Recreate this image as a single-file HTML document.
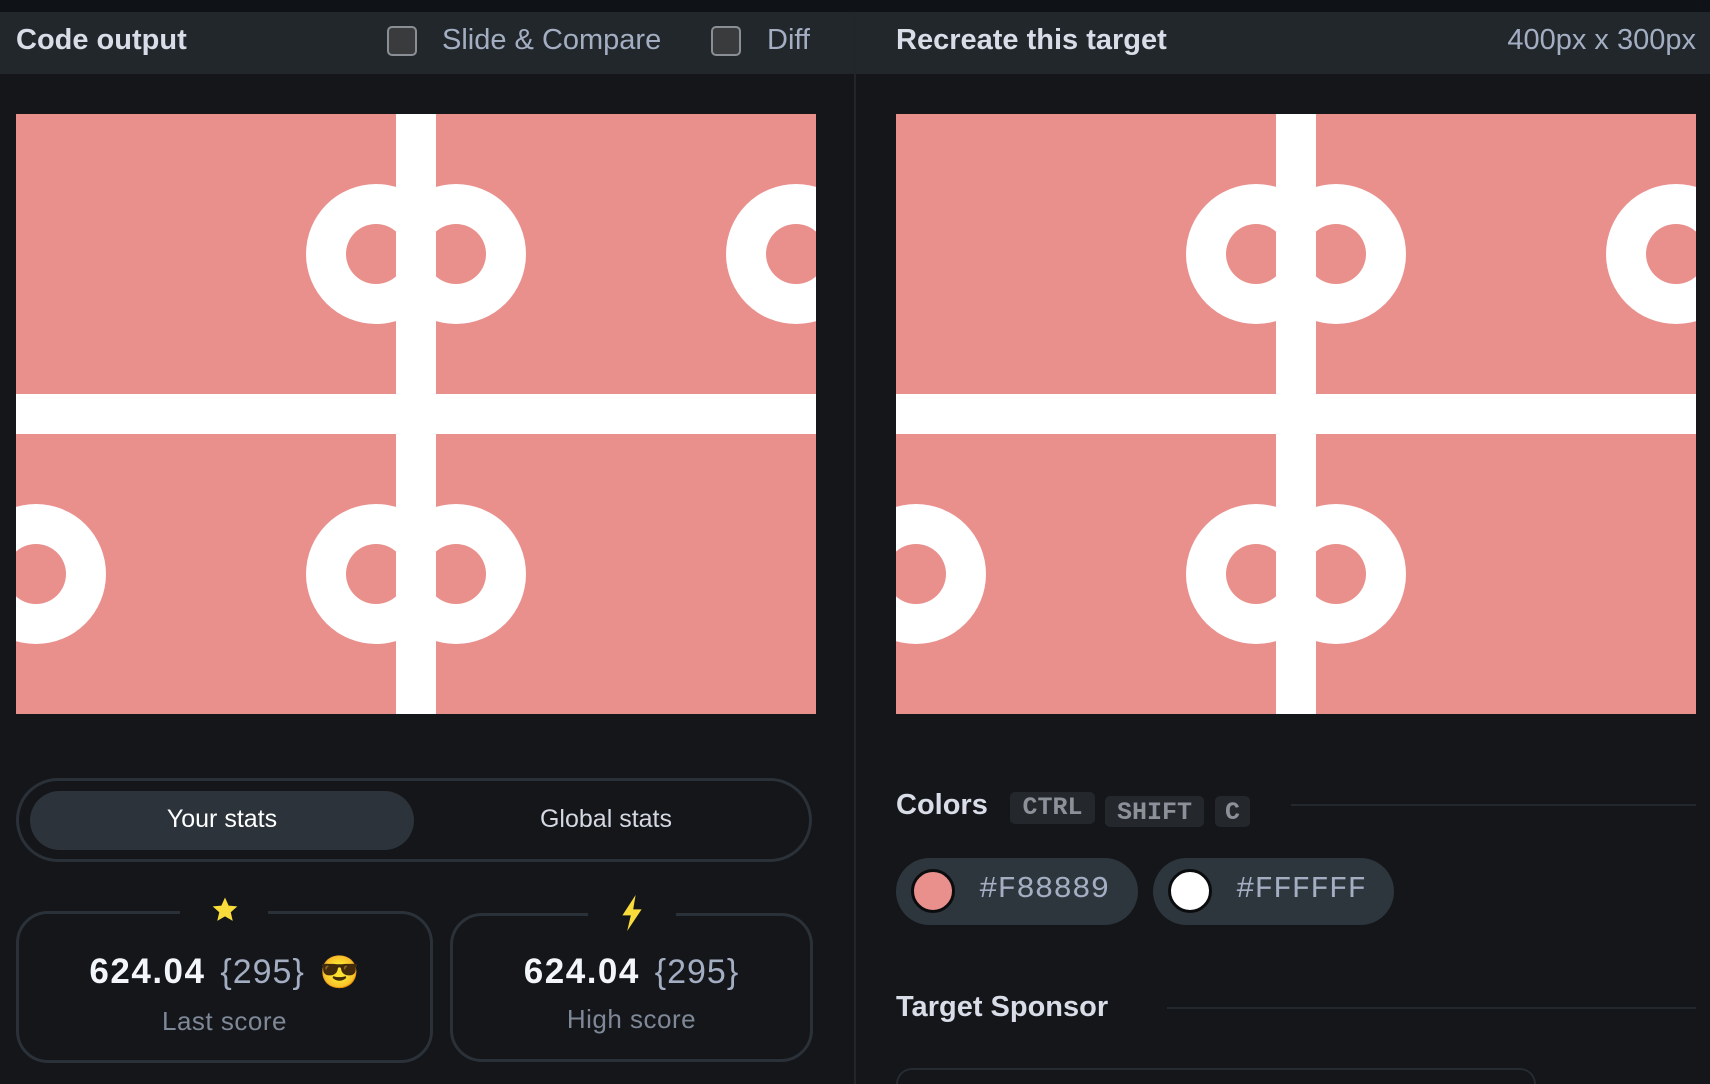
<!DOCTYPE html>
<html style="width:1710px;height:1084px;overflow:hidden"><head><meta charset="utf-8"><style>
*{margin:0;padding:0;box-sizing:border-box}
body{width:1710px;height:1084px;background:#14161a;font-family:"Liberation Sans",sans-serif;position:relative;overflow:hidden;color:#e6e9f0}
.a{position:absolute}
.hdr{top:12px;height:62px;background:#22272c}
.top{top:0;left:0;width:1710px;height:12px;background:#0f1217}
.t{font-weight:bold;font-size:29px;color:#d9dde8;letter-spacing:0px}
.g{font-size:29px;color:#a3aec2}
.cb{width:30px;height:30px;border:2px solid #8a8f96;border-radius:5px;background:#3a3b3c}
.card{border:3px solid #2a3139;border-radius:32px}
.num{font-weight:bold;font-size:35px;color:#f2f5fa;letter-spacing:1.5px}
.br{font-size:34px;color:#a3aec2;font-weight:normal;letter-spacing:1px}
.lbl{font-size:26px;color:#7e8897;letter-spacing:0.5px}
.kbd{background:#24272b;border-radius:5px;font-family:"Liberation Mono",monospace;font-weight:bold;font-size:25px;color:#8c9099;text-align:center}
.chip{background:#2d353d;border-radius:34px;height:67px}
.dot{width:44px;height:44px;border-radius:50%;border:3px solid #0b0c0e;top:11px;left:15px}
.hex{font-family:"Liberation Mono",monospace;font-size:31px;color:#a3aec2;top:14px;left:83px}
.line{height:2px;background:#22282d}
</style></head><body>
<div class="a top"></div>
<div class="a hdr" style="left:0;width:854px"></div>
<div class="a hdr" style="left:856px;width:854px"></div>
<div class="a" style="left:854px;top:12px;width:2px;height:1072px;background:#22262b"></div>
<div class="a t" style="left:16px;top:24px">Code output</div>
<div class="a cb" style="left:387px;top:26px"></div>
<div class="a g" style="left:442px;top:24px">Slide &amp; Compare</div>
<div class="a cb" style="left:711px;top:26px"></div>
<div class="a g" style="left:767px;top:24px">Diff</div>
<div class="a t" style="left:896px;top:24px">Recreate this target</div>
<div class="a g" style="right:14px;top:24px">400px x 300px</div>

<svg class="a" style="left:16px;top:114px" width="800" height="600" viewBox="0 0 400 300">
<rect width="400" height="300" fill="#e98f8c"/>
<g fill="#fff">
<circle cx="180" cy="70" r="35"/><circle cx="220" cy="70" r="35"/><circle cx="390" cy="70" r="35"/>
<circle cx="180" cy="230" r="35"/><circle cx="220" cy="230" r="35"/><circle cx="10" cy="230" r="35"/>
</g>
<g fill="#e98f8c">
<circle cx="180" cy="70" r="15"/><circle cx="220" cy="70" r="15"/><circle cx="390" cy="70" r="15"/>
<circle cx="180" cy="230" r="15"/><circle cx="220" cy="230" r="15"/><circle cx="10" cy="230" r="15"/>
</g>
<rect x="190" y="0" width="20" height="300" fill="#fff"/><rect x="0" y="140" width="400" height="20" fill="#fff"/>
</svg>
<svg class="a" style="left:896px;top:114px" width="800" height="600" viewBox="0 0 400 300">
<rect width="400" height="300" fill="#e98f8c"/>
<g fill="#fff">
<circle cx="180" cy="70" r="35"/><circle cx="220" cy="70" r="35"/><circle cx="390" cy="70" r="35"/>
<circle cx="180" cy="230" r="35"/><circle cx="220" cy="230" r="35"/><circle cx="10" cy="230" r="35"/>
</g>
<g fill="#e98f8c">
<circle cx="180" cy="70" r="15"/><circle cx="220" cy="70" r="15"/><circle cx="390" cy="70" r="15"/>
<circle cx="180" cy="230" r="15"/><circle cx="220" cy="230" r="15"/><circle cx="10" cy="230" r="15"/>
</g>
<rect x="190" y="0" width="20" height="300" fill="#fff"/><rect x="0" y="140" width="400" height="20" fill="#fff"/>
</svg>

<div class="a" style="left:16px;top:778px;width:796px;height:84px;border:3px solid #2a3139;border-radius:42px"></div>
<div class="a" style="left:30px;top:791px;width:384px;height:59px;background:#2c333b;border-radius:30px"></div>
<div class="a" style="left:30px;top:805px;width:384px;text-align:center;font-size:25px;color:#fff">Your stats</div>
<div class="a" style="left:414px;top:805px;width:384px;text-align:center;font-size:25px;color:#d4d8e2">Global stats</div>

<div class="a card" style="left:16px;top:911px;width:417px;height:152px"></div>
<div class="a" style="left:180px;top:905px;width:88px;height:12px;background:#14161a"></div>
<svg class="a" style="left:209px;top:895px" width="32" height="30" viewBox="0 0 24 24"><path d="M12 2l2.9 6.5 7 .6-5.3 4.7 1.6 6.9L12 17.1 5.8 20.7l1.6-6.9L2.1 9.1l7-.6z" fill="#f9dc3c"/></svg>
<div class="a" style="left:16px;top:952px;width:417px;text-align:center;white-space:nowrap"><span class="num">624.04</span> <span class="br">&nbsp;{295}&nbsp;</span> <span style="font-size:32px">😎</span></div>
<div class="a lbl" style="left:16px;top:1006px;width:417px;text-align:center">Last score</div>

<div class="a card" style="left:450px;top:913px;width:363px;height:149px"></div>
<div class="a" style="left:588px;top:905px;width:88px;height:12px;background:#14161a"></div>
<svg class="a" style="left:619px;top:895px" width="26" height="36" viewBox="0 0 20 30"><path d="M13 0L2 17h7l-3 13 12-18h-7z" fill="#f9dc3c"/></svg>
<div class="a" style="left:450px;top:952px;width:363px;text-align:center;white-space:nowrap"><span class="num">624.04</span> <span class="br">&nbsp;{295}</span></div>
<div class="a lbl" style="left:450px;top:1004px;width:363px;text-align:center">High score</div>

<div class="a t" style="left:896px;top:789px">Colors</div>
<div class="a kbd" style="left:1010px;top:792px;width:85px;height:32px;line-height:32px">CTRL</div>
<div class="a kbd" style="left:1105px;top:796px;width:99px;height:31px;line-height:34px">SHIFT</div>
<div class="a kbd" style="left:1215px;top:796px;width:35px;height:31px;line-height:34px">C</div>
<div class="a line" style="left:1291px;top:804px;width:405px"></div>

<div class="a chip" style="left:896px;top:858px;width:242px"><div class="a dot" style="background:#e98f8c"></div><div class="a hex">#F88889</div></div>
<div class="a chip" style="left:1153px;top:858px;width:241px"><div class="a dot" style="background:#fff"></div><div class="a hex">#FFFFFF</div></div>

<div class="a t" style="left:896px;top:991px">Target Sponsor</div>
<div class="a line" style="left:1167px;top:1007px;width:529px"></div>
<div class="a" style="left:896px;top:1068px;width:640px;height:16px;border:2px solid #262b31;border-bottom:none;border-radius:20px 20px 0 0"></div>
</body></html>
